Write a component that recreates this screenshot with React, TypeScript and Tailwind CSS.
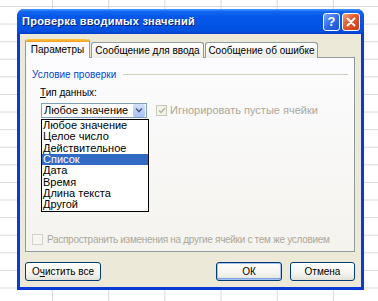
// Окно "Проверка вводимых значений" в стиле Windows XP поверх листа Excel
import React from "react";

const items = [
  "Любое значение",
  "Целое число",
  "Действительное",
  "Список",
  "Дата",
  "Время",
  "Длина текста",
  "Другой",
];

function XpButton({
  children,
  className = "",
  focused = false,
}: {
  children: React.ReactNode;
  className?: string;
  focused?: boolean;
}) {
  return (
    <button
      type="button"
      className={
        "h-[19px] rounded-[3px] border border-[#003c74] bg-[linear-gradient(to_bottom,#ffffff_0%,#f5f4ef_60%,#e3e2d9_100%)] text-[10px] leading-none text-black flex items-center justify-center whitespace-nowrap " +
        (focused ? "shadow-[inset_0_0_0_1px_#a6c2f2,inset_0_-1px_0_1px_#7ca0e4] " : "") +
        className
      }
    >
      {children}
    </button>
  );
}

export default function App() {
  return (
    <div className="w-[378px] h-[301px] overflow-hidden bg-white bg-[linear-gradient(to_right,#d8d9dc_1px,transparent_1px),linear-gradient(to_bottom,#d8d9dc_1px,transparent_1px)] bg-[size:56.2px_17.6px] bg-[position:52px_6px] font-['Liberation_Sans',Arial,sans-serif] pt-[9px]">
      {/* окно */}
      <div className="ml-[17px] w-[347px] h-[281px] flex flex-col rounded-t-[7px] overflow-hidden bg-[#0a3ad6]">
        {/* заголовок */}
        <div className="h-[25px] flex items-center pl-[5px] pr-[4px] bg-[linear-gradient(to_bottom,#4a9bff_0%,#1368f2_10%,#0457e8_30%,#0154e6_60%,#0150df_88%,#003fc8_100%)]">
          <span className="flex-1 text-white font-bold text-[11px] tracking-[0.25px] whitespace-nowrap [text-shadow:1px_1px_0_#0a1c7a]">
            Проверка вводимых значений
          </span>
          <div className="flex gap-[2px]">
            <div className="w-[17px] h-[18px] rounded-[3px] border border-white bg-[linear-gradient(135deg,#7aa6fb_0%,#2b67e8_55%,#1f52d3_100%)] flex items-center justify-center text-white font-bold text-[13px] leading-none">
              ?
            </div>
            <div className="w-[18px] h-[18px] rounded-[3px] border border-white bg-[linear-gradient(135deg,#f0a080_0%,#e35a2c_45%,#c83a14_100%)] flex items-center justify-center">
              <svg width="10" height="10" viewBox="0 0 10 10">
                <path d="M1.5 1.5 L8.5 8.5 M8.5 1.5 L1.5 8.5" stroke="white" strokeWidth="2" strokeLinecap="round" />
              </svg>
            </div>
          </div>
        </div>

        {/* тело окна */}
        <div className="flex-1 mx-[3px] mb-[3px] bg-[#ece9d8] flex flex-col pt-[6px] px-[5px] pr-[6px] text-[10px] text-black whitespace-nowrap">
          {/* вкладки */}
          <div className="h-[18px] flex items-end relative z-10 -mb-px">
            <div className="w-[65px] h-[19px] rounded-t-[3px] border-x border-[#919b9c] bg-[#fcfcfe] flex flex-col">
              <div className="h-[3px] rounded-t-[3px] bg-[linear-gradient(to_bottom,#ffc83c,#f09d28)]" />
              <div className="flex-1 flex items-center justify-center pb-[1px]">Параметры</div>
            </div>
            <div className="ml-[1px] w-[113px] h-[16px] rounded-t-[3px] border border-b-0 border-[#919b9c] bg-[linear-gradient(to_bottom,#ffffff,#eeede7)] flex items-center justify-center">
              Сообщение для ввода
            </div>
            <div className="ml-[1px] w-[113px] h-[16px] rounded-t-[3px] border border-b-0 border-[#919b9c] bg-[linear-gradient(to_bottom,#ffffff,#eeede7)] flex items-center justify-center">
              Сообщение об ошибке
            </div>
          </div>

          {/* панель */}
          <div className="h-[195px] border border-[#919b9c] bg-[linear-gradient(to_bottom,#fcfcfe,#f4f3ee)] flex flex-col pl-[6px] pr-[6px] pt-[10px] pb-[5px]">
            <div className="h-[13px] flex items-center">
              <span className="text-[#0046d5]">Условие проверки</span>
              <div className="flex-1 h-px bg-[#d0d0bf] ml-[7px]" />
            </div>
            <div className="h-[13px] mt-[5px] pl-[8px] flex items-center">
              <span>
                <span className="underline">Т</span>ип данных:
              </span>
            </div>
            <div className="mt-[3px] pl-[9px] flex items-center text-[11px]">
              <div className="relative shrink-0 w-[106px] h-[15px] border border-[#7f9db9] bg-white flex items-center">
                <span className="flex-1 pl-[2px] leading-none">Любое значение</span>
                <div className="w-[12px] h-[13px] mr-px rounded-[2px] bg-[linear-gradient(to_bottom,#d2e0fd,#a9c1f6)] flex items-center justify-center">
                  <svg width="8" height="6" viewBox="0 0 8 6">
                    <path d="M1 1.5 L4 4.5 L7 1.5" stroke="#4d6185" strokeWidth="1.6" fill="none" />
                  </svg>
                </div>
                {/* раскрытый список */}
                <div className="absolute left-[-1px] top-[15px] w-[108px] border border-black bg-white z-20">
                  {items.map((it) => (
                    <div
                      key={it}
                      className={
                        "h-[11.4px] leading-[11.4px] pl-[1px] " +
                        (it === "Список" ? "bg-[#316ac5] text-white" : "text-black")
                      }
                    >
                      {it}
                    </div>
                  ))}
                </div>
              </div>
              <div className="ml-[9px] shrink-0 w-[11px] h-[11px] border border-[#c9c7ba] bg-[#f5f4ea] flex items-center justify-center">
                <svg width="8" height="7" viewBox="0 0 8 7">
                  <path d="M1 3.5 L3 5.5 L7 1" stroke="#b6b5a8" strokeWidth="1.5" fill="none" />
                </svg>
              </div>
              <span className="ml-[3px] text-[#aca899]">Игнорировать пустые ячейки</span>
            </div>

            <div className="flex-1" />

            <div className="h-[13px] flex items-center">
              <div className="shrink-0 w-[11px] h-[11px] border border-[#d4d2c6] bg-[#f7f6f0]" />
              <span className="ml-[4px] text-[#aca899] tracking-[-0.3px]">
                Распространить изменения на другие ячейки с тем же условием
              </span>
            </div>
          </div>

          {/* кнопки */}
          <div className="mt-[10px] flex items-center">
            <XpButton className="w-[76px]">
              <span>
                О<span className="underline">ч</span>истить все
              </span>
            </XpButton>
            <div className="flex-1" />
            <XpButton className="w-[66px]" focused>
              ОК
            </XpButton>
            <XpButton className="w-[65px] ml-[8px]">Отмена</XpButton>
          </div>
        </div>
      </div>
    </div>
  );
}
